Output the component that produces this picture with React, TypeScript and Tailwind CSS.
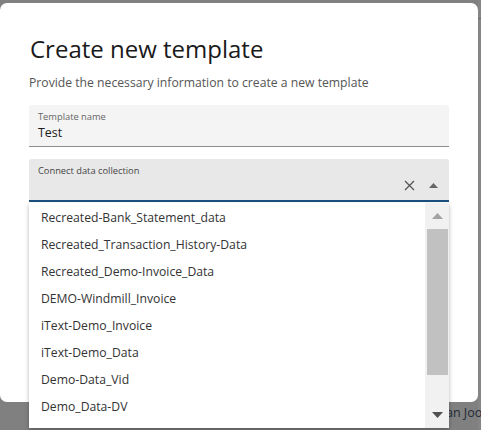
import React from "react";

const items = [
  "Recreated-Bank_Statement_data",
  "Recreated_Transaction_History-Data",
  "Recreated_Demo-Invoice_Data",
  "DEMO-Windmill_Invoice",
  "iText-Demo_Invoice",
  "iText-Demo_Data",
  "Demo-Data_Vid",
  "Demo_Data-DV",
];

export default function App() {
  return (
    <div
      className="relative w-[481px] h-[430px] overflow-hidden bg-[#808080]"
      style={{ fontFamily: '"Open Sans", "Noto Sans", sans-serif' }}
    >
      {/* background page hint */}
      <div className="absolute right-0 top-0 w-[3px] h-[430px] bg-[#858585]">
        <div className="mt-[18px] h-[1px] bg-[#6a6a6a]" />
      </div>
      <div className="absolute left-[446px] top-[404px] text-[12.5px] text-[#1e2a36] whitespace-nowrap">
        an Joo
      </div>

      {/* dialog */}
      <div className="absolute left-0 top-[3px] w-[478px] h-[399px] bg-white rounded-[7px] px-[29px] pt-[30px]">
        <h1 className="text-[24px] leading-[32px] text-[#1a1a1a] ml-[1px]">Create new template</h1>
        <p className="mt-[9px] text-[12.2px] leading-[18px] text-[#555555]">
          Provide the necessary information to create a new template
        </p>
        <div className="mt-[13px] h-[42px] bg-[#f4f4f4] border-b border-[#8d8d8d] rounded-t-[3px] px-[9px] pt-[6px]">
          <div className="text-[9.3px] leading-[12px] text-[#666666]">Template name</div>
          <div className="mt-[1px] text-[12.4px] leading-[18px] text-[#1a1a1a]">Test</div>
        </div>
        <div className="mt-[12px] h-[43px] bg-[#e8e8e8] border-b-[2px] border-[#1b4f7d] rounded-t-[3px] pl-[9px] pr-[11px] pt-[6px] flex">
          <div className="flex-1 text-[9.3px] leading-[12px] text-[#444444]">Connect data collection</div>
          <div className="flex items-center gap-[14px] pt-[6px] self-center">
            <svg width="11" height="11" viewBox="0 0 11 11">
              <path d="M1 1 L10 10 M10 1 L1 10" stroke="#555" strokeWidth="1.3" fill="none" />
            </svg>
            <svg width="9" height="5" viewBox="0 0 9 5">
              <path d="M0 5 L4.5 0 L9 5 Z" fill="#666" />
            </svg>
          </div>
        </div>
      </div>

      {/* dropdown list */}
      <div className="absolute left-[29px] top-[203px] w-[420px] h-[225px] bg-white shadow-[0_2px_4px_rgba(0,0,0,0.3)] flex">
        <div className="flex-1 flex flex-col pt-[2px]">
          {items.map((t) => (
            <div key={t} className="h-[27px] flex items-center pl-[12px] text-[12.2px] text-[#333333] whitespace-nowrap">
              {t}
            </div>
          ))}
        </div>
        <div className="w-[24px] bg-[#f1f1f1] flex flex-col items-center">
          <div className="h-[26px] flex items-center justify-center">
            <svg width="11" height="6" viewBox="0 0 11 6">
              <path d="M0 6 L5.5 0 L11 6 Z" fill="#a3a3a3" />
            </svg>
          </div>
          <div className="w-[21px] h-[146px] bg-[#c1c1c1]" />
          <div className="flex-1" />
          <div className="h-[26px] flex items-center justify-center">
            <svg width="11" height="6" viewBox="0 0 11 6">
              <path d="M0 0 L5.5 6 L11 0 Z" fill="#505050" />
            </svg>
          </div>
        </div>
      </div>
    </div>
  );
}
